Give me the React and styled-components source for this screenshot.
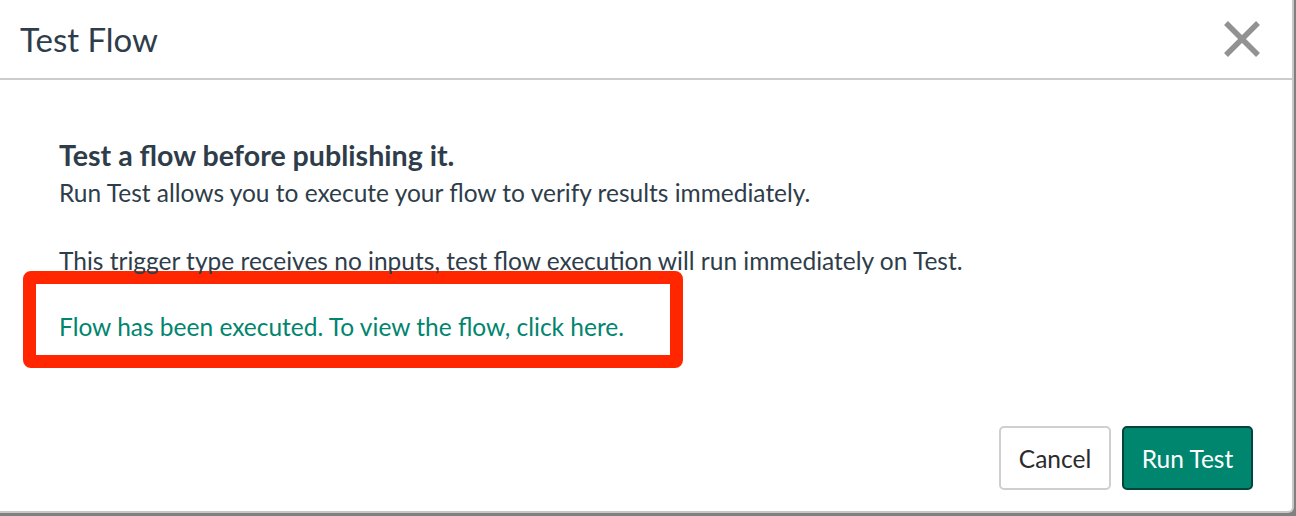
import React from 'react';
import styled, { createGlobalStyle } from 'styled-components';

const GlobalStyle = createGlobalStyle`
  html, body {
    margin: 0;
    padding: 0;
    background: #808080;
    font-family: Lato, "Open Sans", sans-serif;
  }
`;

const Modal = styled.div`
  box-sizing: border-box;
  width: 1294px;
  height: 513px;
  background: #fff;
  border-right: 2px solid #c8c8c8;
  border-bottom: 2px solid #c8c8c8;
  border-bottom-right-radius: 6px;
  display: flex;
  flex-direction: column;
`;

const Header = styled.header`
  height: 78px;
  border-bottom: 2px solid #cccccc;
  display: flex;
  align-items: center;
  justify-content: space-between;
  padding: 0 30px 0 20px;
`;

const Title = styled.h2`
  margin: 0;
  font-size: 33px;
  font-weight: 400;
  color: #2e3d49;
`;

const CloseButton = styled.button`
  border: 0;
  background: none;
  padding: 0;
  width: 40px;
  height: 40px;
  cursor: pointer;
  display: flex;
  align-items: center;
  justify-content: center;
`;

const Body = styled.div`
  padding: 58px 0 0 59px;
  color: #2e3d49;
  font-size: 24.5px;
  line-height: 34px;
`;

const Heading = styled.h3`
  margin: 0 0 4px;
  font-size: 28.6px;
  font-weight: 700;
  line-height: 34px;
`;

const Text = styled.p`
  margin: 0 0 ${props => props.gap || 0}px;
`;

const Highlight = styled.div`
  box-sizing: border-box;
  width: 660px;
  margin: -7px 0 0 -36px;
  padding: 26px 0 11px 23px;
  border: 13px solid #ff2600;
  border-radius: 8px;
`;

const FlowLink = styled.a`
  color: #00856f;
  text-decoration: none;
  cursor: pointer;
`;

const Footer = styled.footer`
  margin-top: auto;
  display: flex;
  justify-content: flex-end;
  gap: 11px;
  padding: 0 39px 21px 0;
`;

const Button = styled.button`
  box-sizing: border-box;
  height: 64px;
  padding: 0 16px;
  border-radius: 5px;
  font-family: inherit;
  font-size: 24.5px;
  cursor: pointer;
  border: 2px solid ${props => (props.primary ? '#00463b' : '#cfcfcf')};
  background: ${props => (props.primary ? '#00856f' : '#fff')};
  color: ${props => (props.primary ? '#fff' : '#2b2b2b')};
`;

function App () {
  return (
    <>
      <GlobalStyle />
      <Modal>
        <Header>
          <Title>Test Flow</Title>
          <CloseButton aria-label='Close'>
            <svg width='38' height='38' viewBox='0 0 38 38'>
              <path d='M3 3 L35 35 M35 3 L3 35' stroke='#929292' strokeWidth='5.5' />
            </svg>
          </CloseButton>
        </Header>
        <Body>
          <Heading>Test a flow before publishing it.</Heading>
          <Text gap={34}>Run Test allows you to execute your flow to verify results immediately.</Text>
          <Text>This trigger type receives no inputs, test flow execution will run immediately on Test.</Text>
          <Highlight>
            <FlowLink>Flow has been executed. To view the flow, click here.</FlowLink>
          </Highlight>
        </Body>
        <Footer>
          <Button style={{ width: 112 }}>Cancel</Button>
          <Button primary style={{ width: 131 }}>Run Test</Button>
        </Footer>
      </Modal>
    </>
  );
}

export default App;
